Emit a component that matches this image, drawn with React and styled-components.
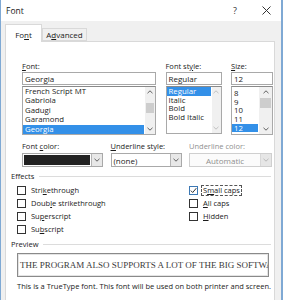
import styled, { createGlobalStyle } from 'styled-components';

const Global = createGlobalStyle`
  html, body { margin: 0; padding: 0; background: #fff; }
  body { font-family: "Open Sans", "Noto Sans", sans-serif; font-size: 7.5px; color: #1b1b1b; }
`

const Window = styled.div`
  width: 283px;
  height: 300px;
  box-sizing: border-box;
  border-left: 1px solid #7fa9d4;
  border-right: 2px solid #7fa9d4;
  background: #f0f0f0;
  overflow: hidden;
`

const TitleBar = styled.div`
  height: 21px;
  background: #fff;
  display: flex;
  align-items: center;
  padding-left: 5px;
  font-size: 8.5px;
  color: #222;
`

const TitleText = styled.div`
  flex: 1;
`

const TitleButton = styled.div`
  width: ${p => p.w}px;
  display: flex;
  justify-content: center;
  align-items: center;
  font-size: 9px;
  color: #333;
`

const TabStrip = styled.div`
  height: 20px;
  display: flex;
  align-items: flex-end;
  padding-left: 4px;
`

const Tab = styled.div`
  box-sizing: border-box;
  height: ${p => (p.active ? 18 : 13)}px;
  width: ${p => p.w}px;
  display: flex;
  align-items: center;
  justify-content: center;
  background: ${p => (p.active ? '#fff' : '#f0f0f0')};
  border: 1px solid #d9d9d9;
  border-bottom: ${p => (p.active ? 'none' : '1px solid #d9d9d9')};
  margin-bottom: ${p => (p.active ? -1 : 0)}px;
  position: relative;
  z-index: ${p => (p.active ? 1 : 0)};
  font-size: 8px;
  padding-top: ${p => (p.active ? 1 : 0)}px;
`

const Panel = styled.div`
  margin: 0 6px 0 4px;
  height: 300px;
  background: #fff;
  border: 1px solid #d9d9d9;
  padding: 19px 3px 0 16px;
`

const Grid = styled.div`
  display: grid;
  grid-template-columns: ${p => p.cols};
  column-gap: ${p => p.gap || 0}px;
  margin-top: ${p => p.mt || 0}px;
  align-items: start;
`

const Field = styled.div`
  display: flex;
  flex-direction: column;
  min-width: 0;
`

const Label = styled.div`
  height: 10px;
  line-height: 10px;
  margin-bottom: 1px;
  color: ${p => (p.disabled ? '#8f8f8f' : '#1b1b1b')};
  white-space: nowrap;
`

const Key = styled.span`
  text-decoration: underline;
  text-underline-offset: 1px;
`

const TextBox = styled.div`
  box-sizing: border-box;
  height: 13px;
  border: 1px solid #a9a9a9;
  background: #fff;
  display: flex;
  align-items: center;
  padding-left: 2px;
  font-size: 8px;
  margin-bottom: 1px;
`

const ListBox = styled.div`
  box-sizing: border-box;
  height: ${p => p.h}px;
  border: 1px solid #a9a9a9;
  border-top-color: #8a8a8a;
  background: #fff;
  display: flex;
  overflow: hidden;
`

const Items = styled.div`
  flex: 1;
  display: flex;
  flex-direction: column;
  padding-top: ${p => p.pt || 0}px;
  min-width: 0;
`

const Item = styled.div`
  height: ${p => p.h}px;
  line-height: ${p => p.h}px;
  padding-left: 2px;
  font-size: 7.8px;
  white-space: nowrap;
  background: ${p => (p.selected ? '#3390e8' : 'transparent')};
  color: ${p => (p.selected ? '#fff' : '#1b1b1b')};
  margin-right: ${p => (p.selected ? 1 : 0)}px;
`

const Scroll = styled.div`
  width: ${p => p.w}px;
  flex-shrink: 0;
  background: #f0f0f0;
  display: flex;
  flex-direction: column;
  align-items: center;
  justify-content: space-between;
  padding: 3px 0;
  position: relative;
`

const Thumb = styled.div`
  position: absolute;
  left: 1px;
  right: 1px;
  top: ${p => p.top}px;
  height: ${p => p.h}px;
  background: #cdcdcd;
`

const Chevron = ({ down, color = '#606060' }) => (
  <svg width="6" height="4" viewBox="0 0 6 4">
    <path d={down ? 'M0.5 0.8 L3 3.2 L5.5 0.8' : 'M0.5 3.2 L3 0.8 L5.5 3.2'} fill="none" stroke={color} strokeWidth="1" />
  </svg>
)

const ScrollBar = ({ w, thumbTop, thumbH, disabled }) => (
  <Scroll w={w}>
    <Chevron color={disabled ? '#c0c0c0' : '#606060'} />
    {!disabled && <Thumb top={thumbTop} h={thumbH} />}
    <Chevron down color={disabled ? '#c0c0c0' : '#606060'} />
  </Scroll>
)

const Combo = styled.div`
  box-sizing: border-box;
  height: 14px;
  border: 1px solid ${p => (p.disabled ? '#cfcfcf' : '#a9a9a9')};
  background: ${p => (p.disabled ? '#fbfbfb' : '#fff')};
  display: flex;
  align-items: stretch;
  margin-top: 1px;
`

const ComboValue = styled.div`
  flex: 1;
  display: flex;
  align-items: center;
  justify-content: ${p => (p.center ? 'center' : 'flex-start')};
  padding-left: ${p => (p.center ? 0 : 2)}px;
  color: ${p => (p.disabled ? '#8f8f8f' : '#1b1b1b')};
  font-size: 8px;
`

const Swatch = styled.div`
  flex: 1;
  margin: 1px;
  background: #222;
`

const ComboButton = styled.div`
  width: 10px;
  border-left: 1px solid ${p => (p.disabled ? '#d8d8d8' : '#b5b5b5')};
  background: ${p => (p.disabled ? '#e6e6e6' : '#e8e8e8')};
  display: flex;
  align-items: center;
  justify-content: center;
`

const Group = styled.div`
  margin-left: -11px;
  margin-top: ${p => p.mt || 0}px;
`

const GroupHead = styled.div`
  display: flex;
  align-items: center;
  gap: 5px;
  height: 10px;
  &::after {
    content: "";
    flex: 1;
    border-top: 1px solid #dcdcdc;
  }
`

const Checks = styled.div`
  display: grid;
  grid-template-columns: 172px 1fr;
  grid-auto-rows: 13px;
  padding: 3px 0 0 6px;
`

const CheckRow = styled.div`
  display: flex;
  align-items: center;
  gap: 4px;
  grid-column: ${p => p.col};
`

const Box = styled.div`
  box-sizing: border-box;
  width: 9px;
  height: 9px;
  border: 1px solid ${p => (p.checked ? '#3c78b4' : '#333')};
  background: #fff;
  display: flex;
  align-items: center;
  justify-content: center;
`

const CheckText = styled.span`
  padding: 0 1px;
  outline: ${p => (p.focus ? '1px dashed #555' : 'none')};
  line-height: 9px;
`

const Check = ({ label, k, col, checked, focus }) => {
  const i = label.indexOf(k)
  return (
    <CheckRow col={col}>
      <Box checked={checked}>
        {checked && (
          <svg width="7" height="7" viewBox="0 0 7 7">
            <path d="M0.8 3.6 L2.7 5.5 L6.3 1.2" fill="none" stroke="#333" strokeWidth="1" />
          </svg>
        )}
      </Box>
      <CheckText focus={focus}>
        {label.slice(0, i)}<Key>{k}</Key>{label.slice(i + 1)}
      </CheckText>
    </CheckRow>
  )
}

const PreviewBox = styled.div`
  box-sizing: border-box;
  margin: 4px 2px 0 6px;
  height: 24px;
  border: 1px solid #8a8a8a;
  box-shadow: inset 0 0 0 1px #e4e4e4;
  display: flex;
  align-items: center;
  padding-left: 2px;
  overflow: hidden;
  white-space: nowrap;
  font-family: "Liberation Serif", "DejaVu Serif", serif;
  font-size: 9px;
  color: #3a3a3a;
`

const Note = styled.div`
  margin: 4px 0 0 6px;
  white-space: nowrap;
  font-size: 7.5px;
`

const fonts = ['French Script MT', 'Gabriola', 'Gadugi', 'Garamond', 'Georgia']
const styles = ['Regular', 'Italic', 'Bold', 'Bold Italic']
const sizes = ['8', '9', '10', '11', '12']

export default function App() {
  return (
    <>
      <Global />
      <Window>
        <TitleBar>
          <TitleText>Font</TitleText>
          <TitleButton w={32}>?</TitleButton>
          <TitleButton w={30}>
            <svg width="9" height="9" viewBox="0 0 9 9">
              <path d="M0.5 0.5 L8.5 8.5 M8.5 0.5 L0.5 8.5" stroke="#333" strokeWidth="1" />
            </svg>
          </TitleButton>
        </TitleBar>
        <TabStrip>
          <Tab active w={37}>Fo<Key>n</Key>t</Tab>
          <Tab w={45}>A<Key>d</Key>vanced</Tab>
        </TabStrip>
        <Panel>
          <Grid cols="134px 56px 42px" gap={9.5}>
            <Field>
              <Label><Key>F</Key>ont:</Label>
              <TextBox>Georgia</TextBox>
              <ListBox h={49}>
                <Items>
                  {fonts.map(f => (
                    <Item key={f} h={9.4} selected={f === 'Georgia'}>{f}</Item>
                  ))}
                </Items>
                <ScrollBar w={10} thumbTop={16} thumbH={10} />
              </ListBox>
            </Field>
            <Field>
              <Label>Font st<Key>y</Key>le:</Label>
              <TextBox>Regular</TextBox>
              <ListBox h={48}>
                <Items>
                  {styles.map(s => (
                    <Item key={s} h={8.6} selected={s === 'Regular'}>{s}</Item>
                  ))}
                </Items>
                <ScrollBar w={9} disabled />
              </ListBox>
            </Field>
            <Field>
              <Label><Key>S</Key>ize:</Label>
              <TextBox>12</TextBox>
              <ListBox h={49}>
                <Items pt={2}>
                  {sizes.map(s => (
                    <Item key={s} h={8.7} selected={s === '12'}>{s}</Item>
                  ))}
                </Items>
                <ScrollBar w={13} thumbTop={11} thumbH={10} />
              </ListBox>
            </Field>
          </Grid>

          <Grid cols="81px 71px 83px" gap={7.5} mt={6}>
            <Field>
              <Label>Font <Key>c</Key>olor:</Label>
              <Combo>
                <Swatch />
                <ComboButton><Chevron down /></ComboButton>
              </Combo>
            </Field>
            <Field>
              <Label><Key>U</Key>nderline style:</Label>
              <Combo>
                <ComboValue>(none)</ComboValue>
                <ComboButton><Chevron down /></ComboButton>
              </Combo>
            </Field>
            <Field>
              <Label disabled>Underline color:</Label>
              <Combo disabled>
                <ComboValue center disabled>Automatic</ComboValue>
                <ComboButton disabled><Chevron down color="#b8b8b8" /></ComboButton>
              </Combo>
            </Field>
          </Grid>

          <Group mt={4}>
            <GroupHead>Effects</GroupHead>
            <Checks>
              <Check label="Strikethrough" k="k" col={1} />
              <Check label="Small caps" k="m" col={2} checked focus />
              <Check label="Double strikethrough" k="l" col={1} />
              <Check label="All caps" k="A" col={2} />
              <Check label="Superscript" k="p" col={1} />
              <Check label="Hidden" k="H" col={2} />
              <Check label="Subscript" k="b" col={1} />
            </Checks>
          </Group>

          <Group mt={3}>
            <GroupHead>Preview</GroupHead>
            <PreviewBox>THE PROGRAM ALSO SUPPORTS A LOT OF THE BIG SOFTWARE</PreviewBox>
            <Note>This is a TrueType font. This font will be used on both printer and screen.</Note>
          </Group>
        </Panel>
      </Window>
    </>
  )
}
